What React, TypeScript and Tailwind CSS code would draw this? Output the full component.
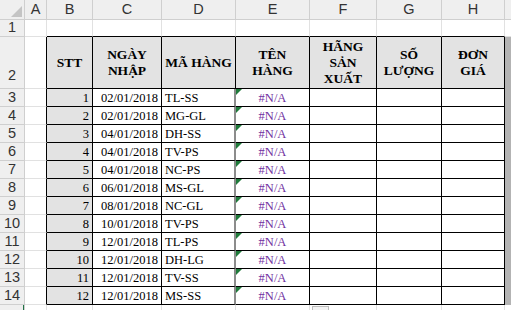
const rows = [
  { n: 1, date: "02/01/2018", code: "TL-SS" },
  { n: 2, date: "02/01/2018", code: "MG-GL" },
  { n: 3, date: "04/01/2018", code: "DH-SS" },
  { n: 4, date: "04/01/2018", code: "TV-PS" },
  { n: 5, date: "04/01/2018", code: "NC-PS" },
  { n: 6, date: "06/01/2018", code: "MS-GL" },
  { n: 7, date: "08/01/2018", code: "NC-GL" },
  { n: 8, date: "10/01/2018", code: "TV-PS" },
  { n: 9, date: "12/01/2018", code: "TL-PS" },
  { n: 10, date: "12/01/2018", code: "DH-LG" },
  { n: 11, date: "12/01/2018", code: "TV-SS" },
  { n: 12, date: "12/01/2018", code: "MS-SS" },
];

const headers = [
  { w: "w-[46px]", lines: ["STT"] },
  { w: "w-[69px]", lines: ["NGÀY", "NHẬP"] },
  { w: "w-[74px]", lines: ["MÃ HÀNG"] },
  { w: "w-[74px]", lines: ["TÊN", "HÀNG"] },
  { w: "w-[67px]", lines: ["HÃNG", "SẢN", "XUẤT"] },
  { w: "w-[65px]", lines: ["SỐ", "LƯỢNG"] },
  { w: "w-[63px]", lines: ["ĐƠN", "GIÁ"] },
];

const letters = [
  { l: "A", w: "w-[22px]" },
  { l: "B", w: "w-[46px]" },
  { l: "C", w: "w-[69px]" },
  { l: "D", w: "w-[74px]" },
  { l: "E", w: "w-[74px]" },
  { l: "F", w: "w-[67px]" },
  { l: "G", w: "w-[65px]" },
  { l: "H", w: "w-[63px]" },
];

const sans = "font-['Liberation_Sans',Arial,sans-serif]";
const serif = "font-['Liberation_Serif','Times_New_Roman',serif]";

function RowHead({ label, h, bottom }: { label: string; h: string; bottom?: boolean }) {
  return (
    <div
      className={`${h} w-[25px] shrink-0 bg-[#efefef] border-r border-b border-[#cfcfcf] flex justify-center text-[14.5px] text-[#333] ${sans} ${
        bottom ? "items-end pb-[1px]" : "items-center"
      }`}
    >
      {label}
    </div>
  );
}

export default function App() {
  return (
    <div className="relative w-[511px] h-[310px] overflow-hidden bg-white">
      {/* column letters */}
      <div className="flex h-[20px]">
        <div className="relative w-[25px] shrink-0 bg-[#efefef] border-r border-b border-[#cfcfcf]">
          <svg className="absolute right-[2px] bottom-[2px]" width="11" height="11" viewBox="0 0 11 11">
            <polygon points="11,0 11,11 0,11" fill="#c4c4c4" />
          </svg>
        </div>
        {letters.map((c) => (
          <div
            key={c.l}
            className={`${c.w} shrink-0 bg-[#efefef] border-r border-b border-[#cfcfcf] flex items-center justify-center text-[14.5px] text-[#333] ${sans}`}
          >
            {c.l}
          </div>
        ))}
        <div className="w-[6px] shrink-0 bg-[#efefef] border-b border-[#cfcfcf]" />
      </div>

      {/* row 1 */}
      <div className="flex h-[17px]">
        <RowHead label="1" h="h-[17px]" />
        <div className="w-[22px] shrink-0 border-r border-b border-[#e1e1e1]" />
        {headers.map((c, i) => (
          <div key={i} className={`${c.w} shrink-0 border-r border-r-[#e1e1e1] border-b border-b-black`} />
        ))}
        <div className="w-[6px] shrink-0 border-b border-[#e1e1e1]" />
      </div>

      {/* row 2 headers */}
      <div className="flex h-[52px]">
        <RowHead label="2" h="h-[52px]" bottom />
        <div className="relative w-[22px] shrink-0 border-r border-r-black border-b border-b-[#e1e1e1]" />
        {headers.map((c, i) => (
          <div
            key={i}
            className={`${c.w} shrink-0 bg-[#e3e3e3] border-r border-b border-black flex flex-col items-center justify-center text-[13.5px] leading-[16px] font-bold text-black ${serif}`}
          >
            {c.lines.map((t) => (
              <span key={t}>{t}</span>
            ))}
          </div>
        ))}
        <div className="w-[6px] shrink-0 bg-[#b3b3b3]" />
      </div>

      {/* data rows */}
      {rows.map((r) => (
        <div key={r.n} className={`flex h-[18px] text-[12.5px] leading-none text-black ${serif}`}>
          <RowHead label={String(r.n + 2)} h="h-[18px]" />
          <div className="w-[22px] shrink-0 border-r border-r-black border-b border-b-[#e1e1e1]" />
          <div className="w-[46px] shrink-0 bg-[#e3e3e3] border-r border-b border-black flex items-center justify-end pr-[3px] pt-[1px]">
            {r.n}
          </div>
          <div className="w-[69px] shrink-0 border-r border-b border-black flex items-center justify-end pr-[3px] pt-[1px]">
            {r.date}
          </div>
          <div className="w-[74px] shrink-0 border-r-2 border-r-[#8c8c8c] border-b border-b-black flex items-center pl-[3px] pt-[1px]">
            {r.code}
          </div>
          <div className="relative w-[74px] shrink-0 border-r border-b border-black flex items-center justify-center pt-[1px] text-[#7030a0]">
            <svg className="absolute left-0 top-0" width="6" height="6" viewBox="0 0 6 6">
              <polygon points="0,0 6,0 0,6" fill="#1f7a3a" />
            </svg>
            #N/A
          </div>
          <div className="w-[67px] shrink-0 border-r border-b border-black" />
          <div className="w-[65px] shrink-0 border-r border-b border-black" />
          <div className="w-[63px] shrink-0 border-r border-b border-black" />
          <div className="w-[6px] shrink-0 bg-[#b3b3b3]" />
        </div>
      ))}

      {/* row 15, partly visible */}
      <div className="flex h-[5px]">
        <div className="relative w-[25px] shrink-0 bg-[#efefef] border-r border-[#cfcfcf]">
          <div className="absolute right-0 top-0 h-full w-[1px] bg-[#217346]" />
        </div>
        <div className="w-[22px] shrink-0 border-r border-[#e1e1e1]" />
        {headers.map((c, i) => (
          <div key={i} className={`${c.w} shrink-0 border-r border-[#e1e1e1]`} />
        ))}
      </div>

      {/* quick analysis button peeking out */}
      <div className="absolute left-[312px] top-[306px] w-[17px] h-[8px] bg-[#f3f3f3] border border-[#bdbdbd]" />
    </div>
  );
}
